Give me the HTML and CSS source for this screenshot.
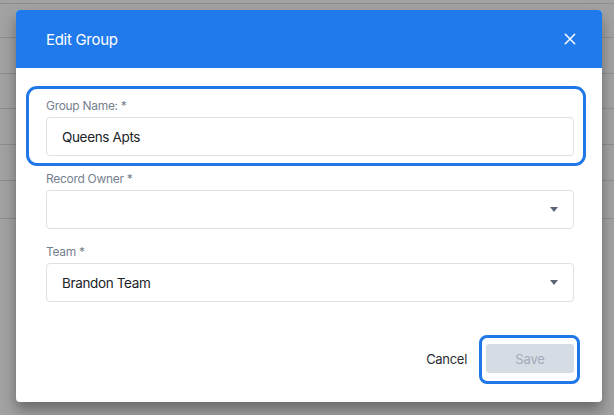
FILE: index.html
```html
<!DOCTYPE html>
<html lang="en">
<head>
<meta charset="utf-8">
<title>Edit Group</title>
<link rel="stylesheet" href="styles.css">
</head>
<body>
<div class="backdrop">
  <div class="bg-row r1"></div>
  <div class="bg-row r2"></div>
  <div class="bg-row r3"></div>
  <div class="bg-row r4"></div>
  <div class="bg-row r5"></div>
  <div class="bg-row r6"></div>
  <div class="bg-row r7"></div>
</div>
<div class="modal">
  <header class="modal-header">
    <h2 class="modal-title">Edit Group</h2>
    <button class="close-btn" aria-label="Close">
      <svg width="12" height="12" viewBox="0 0 12 12"><path d="M1.3 1.3 L10.7 10.7 M10.7 1.3 L1.3 10.7" stroke="#fff" stroke-width="1.5" stroke-linecap="round" fill="none"/></svg>
    </button>
  </header>
  <div class="modal-body">
    <div class="field field-highlight">
      <label class="field-label">Group Name: *</label>
      <div class="control">Queens Apts</div>
    </div>
    <div class="field">
      <label class="field-label">Record Owner *</label>
      <div class="control select"><span></span><span class="caret"></span></div>
    </div>
    <div class="field">
      <label class="field-label">Team *</label>
      <div class="control select"><span>Brandon Team</span><span class="caret"></span></div>
    </div>
  </div>
  <footer class="modal-footer">
    <button class="btn-cancel">Cancel</button>
    <button class="btn-save">Save</button>
  </footer>
</div>
</body>
</html>
```
FILE: styles.css
```css
* { box-sizing: border-box; }
html, body { margin: 0; padding: 0; }
body {
  width: 614px;
  height: 415px;
  overflow: hidden;
  background: #a2a2a2;
  font-family: Inter, "Liberation Sans", sans-serif;
  position: relative;
}
.backdrop {
  display: flex;
  flex-direction: column;
}
.bg-row { border-bottom: 1px solid #8e8e8e; }
.r1 { height: 4px; }
.r2 { height: 34px; }
.r3 { height: 36px; }
.r4 { height: 35px; }
.r5 { height: 36px; }
.r6 { height: 36px; }
.r7 { height: 38px; }

.modal {
  position: absolute;
  left: 16px;
  top: 10px;
  width: 586px;
  height: 392px;
  background: #fff;
  border-radius: 4px;
  box-shadow: 0 8px 14px rgba(0,0,0,0.35);
  display: flex;
  flex-direction: column;
}
.modal-header {
  height: 58px;
  background: #217aeb;
  border-radius: 4px 4px 0 0;
  display: flex;
  align-items: center;
  justify-content: space-between;
  padding: 0 26px 0 30px;
}
.modal-title {
  margin: 0;
  color: #fff;
  font-size: 15px;
  font-weight: 400;
  letter-spacing: -0.3px;
}
.close-btn {
  background: none;
  border: 0;
  padding: 0;
  width: 12px;
  height: 12px;
  display: flex;
}
.modal-body {
  padding: 30px 28px 0 30px;
  display: flex;
  flex-direction: column;
  gap: 15px;
}
.field {
  display: flex;
  flex-direction: column;
  gap: 3px;
  position: relative;
}
.field-highlight::after {
  content: "";
  position: absolute;
  left: -20px;
  right: -12px;
  top: -12px;
  bottom: -10px;
  border: 3px solid #1f77e8;
  border-radius: 11px;
}
.field-label {
  font-size: 12px;
  line-height: 16px;
  color: #767f8e;
  letter-spacing: -0.3px;
}
.control {
  height: 39px;
  border: 1px solid #dce1e8;
  border-radius: 4px;
  padding: 0 15px;
  display: flex;
  align-items: center;
  font-size: 13.5px;
  letter-spacing: -0.35px;
  color: #202328;
}
.select { justify-content: space-between; }
.caret {
  width: 0;
  height: 0;
  border-left: 4.5px solid transparent;
  border-right: 4.5px solid transparent;
  border-top: 5px solid #5c6578;
}
.modal-footer {
  margin-top: auto;
  padding: 0 28px 29px 0;
  display: flex;
  justify-content: flex-end;
  align-items: center;
  gap: 19px;
}
.btn-cancel {
  background: none;
  border: 0;
  padding: 0;
  font-family: inherit;
  font-size: 13px;
  letter-spacing: -0.3px;
  color: #2b2d31;
}
.btn-save {
  position: relative;
  width: 88px;
  height: 29px;
  border: 0;
  border-radius: 3px;
  background: #d6dce4;
  color: #a3abb9;
  font-family: inherit;
  font-size: 13px;
  letter-spacing: -0.2px;
}
.btn-save::after {
  content: "";
  position: absolute;
  left: -7px;
  right: -6px;
  top: -9px;
  bottom: -11px;
  border: 3px solid #1f77e8;
  border-radius: 8px;
}
```
